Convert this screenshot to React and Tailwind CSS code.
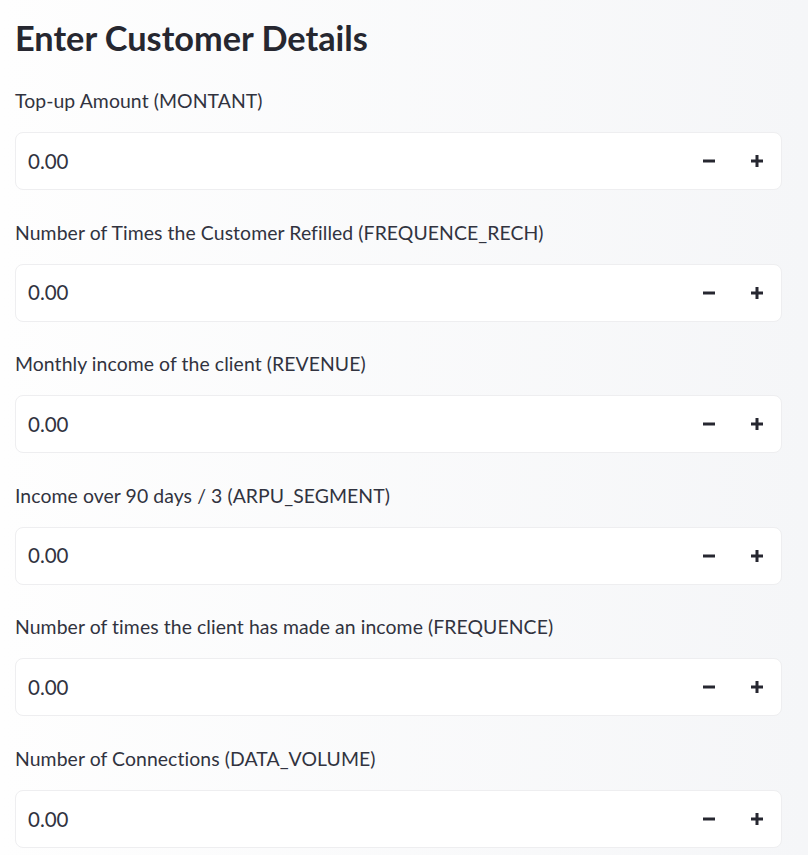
import React from "react";

const fields = [
  "Top-up Amount (MONTANT)",
  "Number of Times the Customer Refilled (FREQUENCE_RECH)",
  "Monthly income of the client (REVENUE)",
  "Income over 90 days / 3 (ARPU_SEGMENT)",
  "Number of times the client has made an income (FREQUENCE)",
  "Number of Connections (DATA_VOLUME)",
];

const Minus = () => (
  <svg width="14" height="14" viewBox="0 0 14 14">
    <path d="M1 7h12" stroke="#262730" strokeWidth="3" />
  </svg>
);

const Plus = () => (
  <svg width="14" height="14" viewBox="0 0 14 14">
    <path d="M1 7h12M7 1v12" stroke="#262730" strokeWidth="3" />
  </svg>
);

const NumberField = ({ label }) => (
  <div className="flex flex-col">
    <label className="h-6 leading-6 text-[19.4px] tracking-[0.08px] text-[#31333f]">{label}</label>
    <div className="mt-[19px] h-[58px] bg-white border border-[#eeeef0] rounded-lg flex items-center pl-3 pr-[17px]">
      <span className="flex-1 text-[20.5px] text-[#31333f]">0.00</span>
      <div className="flex items-center gap-[34px]">
        <Minus />
        <Plus />
      </div>
    </div>
  </div>
);

export default function App() {
  return (
    <div
      className="min-h-[855px] w-full bg-gradient-to-r from-[#fefefe] to-[#f5f6f8] pl-[15px] pr-[26px] pt-[14px]"
      style={{ fontFamily: "Lato, 'Noto Sans', sans-serif" }}
    >
      <h1 className="text-[34.3px] leading-[48px] font-bold text-[#262730]">
        Enter Customer Details
      </h1>
      <div className="mt-[27px] flex flex-col gap-[30.6px]">
        {fields.map((f) => (
          <NumberField key={f} label={f} />
        ))}
      </div>
    </div>
  );
}
